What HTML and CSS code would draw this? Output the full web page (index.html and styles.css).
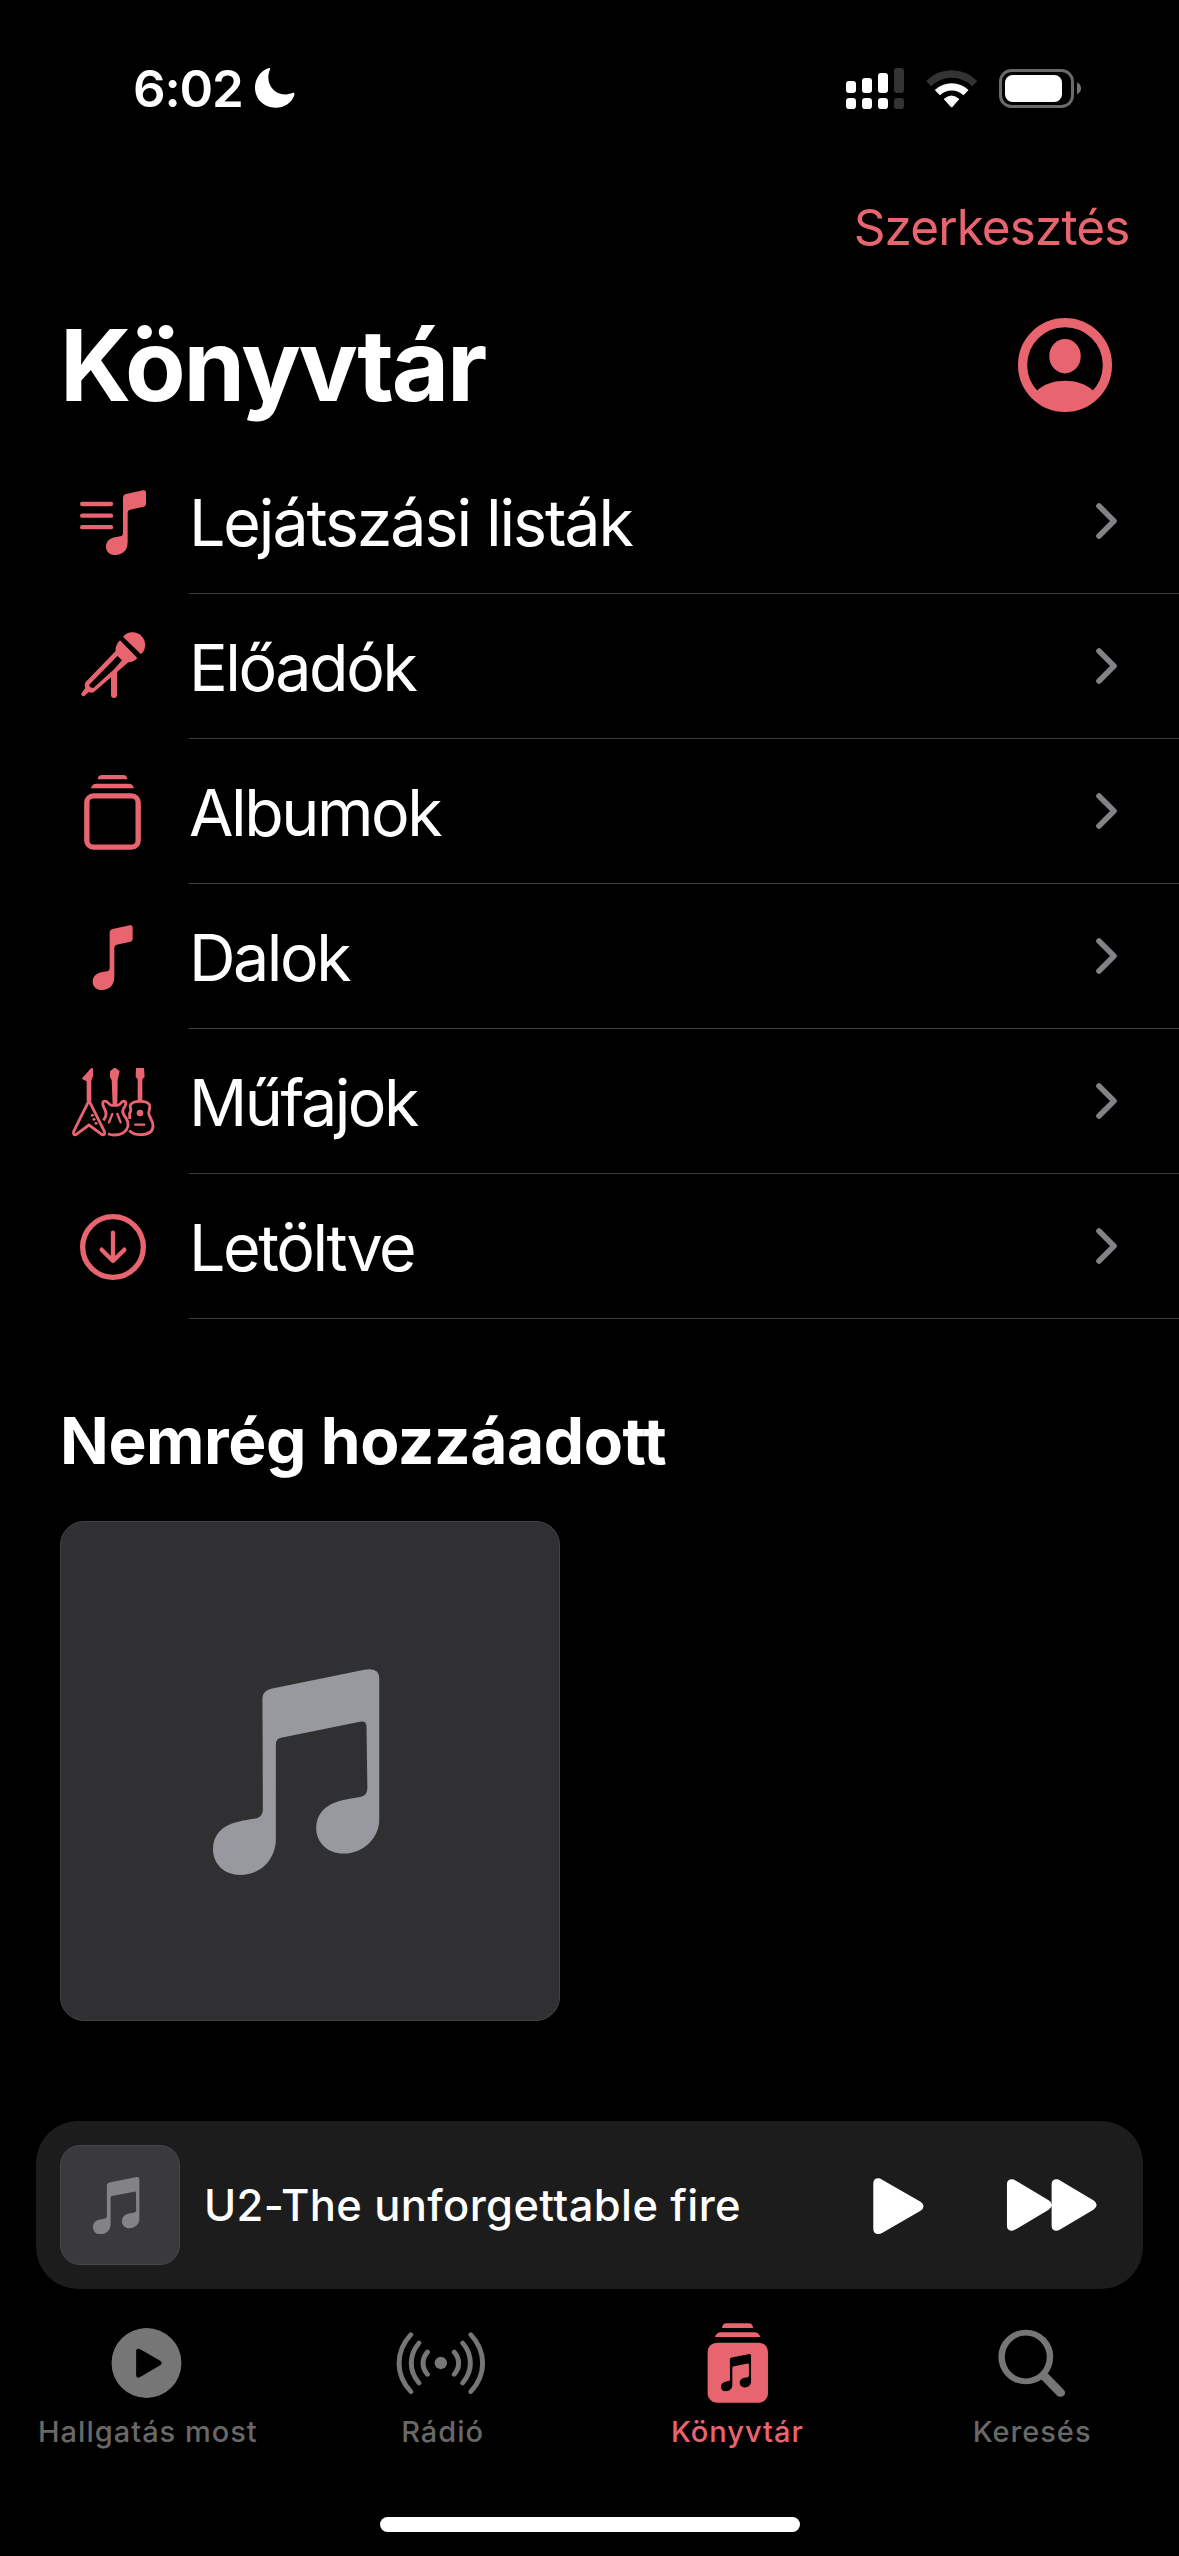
FILE: index.html
```html
<!DOCTYPE html>
<html lang="hu">
<head>
<meta charset="utf-8">
<title>Könyvtár</title>
<link rel="stylesheet" href="styles.css">
</head>
<body>
<svg class="defs" aria-hidden="true">
  <symbol id="notes" viewBox="399 687 384 489" preserveAspectRatio="none">
    <path d="M513 757Q513 739 533 734L748 689Q783 681 783 712V1040C783 1090 745 1125 700 1125C662 1125 637 1098 637 1065C637 1030 660 1008 695 999C715 994 728 993 740 990Q755 987 755 970L753 824Q753 809 738 812L556 850Q544 852 544 866V1090C544 1140 508 1176 462 1176C425 1176 399 1150 399 1115C399 1080 420 1058 455 1050C475 1045 488 1044 500 1041Q514 1037 514 1020Z"/>
  </symbol>
  <symbol id="chevron" viewBox="0 0 21 36">
    <path d="M3 3L18 18L3 33" fill="none" stroke="#828287" stroke-width="5.6" stroke-linecap="round" stroke-linejoin="round"/>
  </symbol>
</svg>

<header class="status">
  <span class="time">6:02</span>
  <svg class="moon" viewBox="464 86 119 119"><path d="M503 87Q510 84 509 90C498 115 505 138 520 152C537 167 562 167 576 160Q583 158 581 166C574 190 550 204 525 204C490 204 464 178 464 145C464 118 480 96 503 87Z"/></svg>
  <svg class="indicators" viewBox="78 45 708 135">
    <g fill="#fff">
      <rect x="78" y="90" width="30" height="36" rx="9"/><rect x="126" y="81" width="30" height="45" rx="9"/><rect x="174" y="66" width="30" height="60" rx="9"/>
      <rect x="78" y="141" width="30" height="33" rx="10"/><rect x="126" y="141" width="30" height="33" rx="10"/><rect x="174" y="141" width="30" height="33" rx="10"/>
    </g>
    <g fill="#333"><rect x="222" y="51" width="30" height="75" rx="9"/><rect x="222" y="141" width="30" height="33" rx="10"/></g>
    <g fill="none" stroke-width="22">
      <path d="M326 98A98 100 0 0 1 464 98" stroke="#333"/>
      <path d="M352 125A62 62 0 0 1 438 125" stroke="#fff"/>
    </g>
    <path d="M371 144Q395 123 418 144L398 167Q395 170 392 167Z" fill="#fff"/>
    <rect x="541.5" y="58.500" width="216" height="108" rx="33" fill="none" stroke="#6a6a6a" stroke-width="9"/>
    <rect x="555" y="72" width="171" height="81" rx="23" fill="#fff"/>
    <path d="M771 94Q783 100 783 112T771 130Z" fill="#757575"/>
  </svg>
</header>

<nav class="toolbar"><a class="edit">Szerkesztés</a></nav>

<main>
  <div class="title-row">
    <h1>Könyvtár</h1>
    <svg class="avatar" viewBox="0 0 94 94">
      <circle cx="47" cy="47" r="42.400" fill="none" stroke="#e8646f" stroke-width="9.200"/>
      <ellipse cx="47" cy="38.200" rx="15.700" ry="17.200"/>
      <path d="M19 72.500C33 59.500 61 59.500 75 72.500L76 80Q47 100 18 80Z"/>
    </svg>
  </div>

  <ul class="list">
    <li>
      <svg class="icon" viewBox="30 -33 387 435">
        <path d="M96.500 132H183M96.500 167H183M96.500 201.500H183" stroke="#e8646f" stroke-width="13" stroke-linecap="round"/>
        <path d="M219 114Q219 104 228 102L279 91Q288 89 288 98V131Q288 138 281 140L240 149Q233 151 233 158V246C233 270 218 285 196 285C179 285 168 275 168 260C168 245 178 236 194 232L211 229Q219 227 219 218Z"/>
      </svg>
      <div class="cell"><span class="wide">Lejátszási listák</span><svg class="chevron"><use href="#chevron"/></svg></div>
    </li>
    <li>
      <svg class="icon" viewBox="30 402 387 435">
        <path d="M183 646L201 628V705Q201 714 192 714Q183 714 183 705Z"/>
        <path fill-rule="evenodd" d="M197 573L107 666Q102 673 106 684L95 698Q92 703 96 707Q100 710 104 707L117 696Q125 701 132 696L236 606ZM203 587L117 675L121 682L130 684L192 628L216 601Z"/>
        <path d="M210 541C198 552 195 568 197 579C206 592 220 605 235 607C246 607 256 601 262 594Z"/>
        <path d="M219 530A37.900 37.900 0 1 1 273 583Z"/>
      </svg>
      <div class="cell"><span>Előadók</span><svg class="chevron"><use href="#chevron"/></svg></div>
    </li>
    <li>
      <svg class="icon" viewBox="30 -33 387 435">
        <rect x="110.500" y="137.500" width="154" height="154" rx="20" fill="none" stroke="#e8646f" stroke-width="16"/>
        <path d="M123 115Q125 101 139 101H236Q249 101 252 115ZM143 88Q144 75 156 75H220Q231 75 232 88Z"/>
      </svg>
      <div class="cell"><span>Albumok</span><svg class="chevron"><use href="#chevron"/></svg></div>
    </li>
    <li>
      <svg class="icon" viewBox="30 402 387 435">
        <path transform="translate(-40 435)" d="M219 114Q219 104 228 102L279 91Q288 89 288 98V131Q288 138 281 140L240 149Q233 151 233 158V246C233 270 218 285 196 285C179 285 168 275 168 260C168 245 178 236 194 232L211 229Q219 227 219 218Z"/>
      </svg>
      <div class="cell"><span>Dalok</span><svg class="chevron"><use href="#chevron"/></svg></div>
    </li>
    <li>
      <svg class="icon" viewBox="30 -33 387 435">
        <path d="M95 116L123 85Q129 82 129 87V108L124 122V184H110V124ZM180 94L192 84H197L209 94L203 120L202 197H188L185 120L180 112ZM258 84H282L284 110L277 118V184H263V118L257 110Z"/>
        <g fill="none" stroke="#e8646f" stroke-width="8.500" stroke-linejoin="round" stroke-linecap="butt">
          <path d="M117 182L71 274Q68 286 78 284L117 255L156 284Q167 286 163 274Z"/>
          <path d="M160 241C170 229 169 216 164 207C158 197 156 187 162 184C173 179 174 196 186 196H202C213 196 213 181 224 184C231 187 226 198 220 207C214 217 222 226 229 236C242 258 229 285 194 285C186 285 180 284 174 281"/>
          <path d="M239 237V219C248 210 238 204 241 196C245 185 256 184 270 184C284 184 296 185 299 196C302 208 293 214 297 224C300 234 309 242 309 258C309 277 294 284 270 284C255 284 245 280 238 271"/>
          <path d="M187 222L177 247M202 222L212 247M256 254H283" stroke-width="7" stroke-linecap="round"/>
        </g>
        <circle cx="270" cy="219" r="10"/><circle cx="127" cy="226" r="4.500"/><circle cx="132" cy="238" r="4.500"/><circle cx="138" cy="250" r="4.500"/>
      </svg>
      <div class="cell"><span>Műfajok</span><svg class="chevron"><use href="#chevron"/></svg></div>
    </li>
    <li>
      <svg class="icon" viewBox="30 402 387 435">
        <g fill="none" stroke="#e8646f" stroke-linecap="round" stroke-linejoin="round">
          <circle cx="189" cy="621" r="91" stroke-width="16"/>
          <path d="M189 578V662M155 629L189 663L223 629" stroke-width="13"/>
        </g>
      </svg>
      <div class="cell"><span>Letöltve</span><svg class="chevron"><use href="#chevron"/></svg></div>
    </li>
  </ul>

  <h2>Nemrég hozzáadott</h2>
  <div class="album"><svg class="album-note"><use href="#notes"/></svg></div>
</main>

<section class="player">
  <div class="thumb"><svg class="thumb-note"><use href="#notes"/></svg></div>
  <span class="track">U2-The unforgettable fire</span>
  <svg class="play" viewBox="704 195 216.600 240" preserveAspectRatio="none"><path d="M740 251Q740 235 754 235Q758 235 764 239L868 305Q876 311 876 319Q876 327 868 332L765 398Q758 402 754 402Q740 402 740 387Z"/></svg>
  <svg class="forward" viewBox="1083.200 195 270.800 240" preserveAspectRatio="none"><path id="ff" d="M1102 253Q1102 238 1116 238Q1120 238 1126 242L1215 301Q1224 307 1224 315Q1224 322 1215 329L1126 388Q1120 392 1116 392Q1102 392 1102 377Z"/><use href="#ff" x="121"/></svg>
</section>

<nav class="tabs">
  <a class="tab">
    <svg viewBox="209.200 630 270.340 300" preserveAspectRatio="none"><path fill-rule="evenodd" d="M248.500 789A94.500 105 0 1 0 437.500 789A94.500 105 0 1 0 248.500 789ZM315 754Q315 746 321 746Q323 746 326 748L380 782Q384 785 384 789Q384 793 380 796L326 831Q323 833 321 833Q315 833 315 825Z"/></svg>
    <span>Hallgatás most</span>
  </a>
  <a class="tab">
    <svg viewBox="1006 630 270.340 300" preserveAspectRatio="none">
      <ellipse cx="1138" cy="789" rx="17" ry="18.500"/>
      <g fill="none" stroke="#767676" stroke-width="13.500" stroke-linecap="round">
        <path d="M1219 704A166 145 0 0 1 1219 875M1197 729A124 108 0 0 1 1197 849M1174 756A68 59 0 0 1 1174 823M1057 704A166 145 0 0 0 1057 875M1079 729A124 108 0 0 0 1079 849M1102 756A68 59 0 0 0 1102 823"/>
      </g>
    </svg>
    <span>Rádió</span>
  </a>
  <a class="tab active">
    <svg viewBox="235.200 630 270.800 300" preserveAspectRatio="none">
      <rect x="291" y="728" width="163.500" height="180" rx="25" ry="27"/>
      <path d="M311 711Q314 697 328 697H417Q430 697 434 711ZM330 684Q331 670 342 670H403Q413 670 414 684Z"/>
      <use href="#notes" x="327" y="762" width="82" height="112" fill="#000"/>
    </svg>
    <span>Könyvtár</span>
  </a>
  <a class="tab">
    <svg viewBox="1033.400 630 270.800 300" preserveAspectRatio="none">
      <g fill="none" stroke="#767676"><ellipse cx="1152" cy="771" rx="65.500" ry="73" stroke-width="17.500"/><path d="M1201 827L1246 878" stroke-width="25" stroke-linecap="round"/></g>
    </svg>
    <span>Keresés</span>
  </a>
</nav>
<div class="home"></div>
</body>
</html>
```
FILE: styles.css
```css
* { box-sizing: border-box; }

body {
  margin: 0;
  width: 1179px;
  height: 2556px;
  overflow: hidden;
  background: #000;
  color: #fff;
  font-family: Inter, "Liberation Sans", sans-serif;
}

svg { display: block; flex: none; }
.defs { display: none; }

.status {
  display: flex;
  align-items: center;
  height: 176px;
  padding: 0 97px 0 133px;
}
.time { width: 121.500px; font-size: 51px; font-weight: 600; letter-spacing: -1.200px; white-space: nowrap; }
.moon { width: 40px; height: 40px; fill: #fff; }
.indicators { width: 236px; height: 45px; margin-left: auto; }

.toolbar {
  display: flex;
  justify-content: flex-end;
  align-items: center;
  height: 102px;
  padding-right: 49.500px;
}
.edit { color: #e8646f; font-size: 49.500px; letter-spacing: -0.900px; }

.title-row {
  display: flex;
  align-items: center;
  justify-content: space-between;
  height: 171px;
  padding: 3px 67px 0 60px;
}
h1 { margin: 0; font-size: 99px; font-weight: 700; letter-spacing: -2.250px; }
.avatar { width: 94px; height: 94px; fill: #e8646f; }

.list { margin: 0; padding: 0; list-style: none; }
.list li { display: flex; height: 145px; padding-left: 60px; }
.icon { width: 129px; height: 145px; fill: #e8646f; }
.cell {
  flex: 1;
  display: flex;
  align-items: center;
  justify-content: space-between;
  padding-right: 62px;
  border-bottom: 1px solid #3b3b3d;
  font-size: 64.500px;
  letter-spacing: -2.450px;
}
.cell span { padding-top: 3px; }
.cell .wide { letter-spacing: -2.100px; }
.chevron { width: 21px; height: 36px; }

h2 {
  display: flex;
  align-items: center;
  height: 202px;
  margin: 0;
  padding: 40px 60px 0;
  font-size: 64px;
  font-weight: 700;
  letter-spacing: -0.400px;
}

.album {
  display: flex;
  width: 500px;
  height: 500px;
  margin: 0 60px 100px;
  padding: 147px 0 0 152px;
  border: 1px solid #434346;
  border-radius: 24px;
  background: #303032;
}
.album-note { width: 166.500px; height: 206px; fill: #98999e; }

.player {
  display: flex;
  align-items: center;
  height: 168px;
  margin: 0 36px;
  padding: 0 43px 0 24px;
  border-radius: 42px;
  background: #1c1c1c;
}
.thumb {
  display: flex;
  width: 120px;
  height: 120px;
  padding: 31px 0 0 32px;
  border: 1px solid #47474b;
  border-radius: 20px;
  background: #3a393e;
}
.thumb-note { width: 46.600px; height: 57.300px; fill: #838287; }
.track { flex: 1; padding-left: 24px; font-size: 43.500px; font-weight: 500; letter-spacing: 0.380px; white-space: nowrap; }
.play { width: 80px; height: 80px; margin-right: 60px; fill: #fff; }
.forward { width: 100px; height: 80px; fill: #fff; }

.tabs { display: flex; padding-top: 21px; }
.tab {
  flex: 1;
  display: flex;
  flex-direction: column;
  align-items: center;
  color: #686868;
  fill: #767676;
  font-size: 29px;
  font-weight: 500;
  line-height: 43px;
  letter-spacing: 1px;
}
.tab span { padding-left: 1px; }
.tab svg { width: 100px; height: 100px; }
.tab.active { color: #e8646f; fill: #e8646f; }

.home { width: 420px; height: 15px; margin: 64px 0 0 380px; border-radius: 8px; background: #fff; }
```
